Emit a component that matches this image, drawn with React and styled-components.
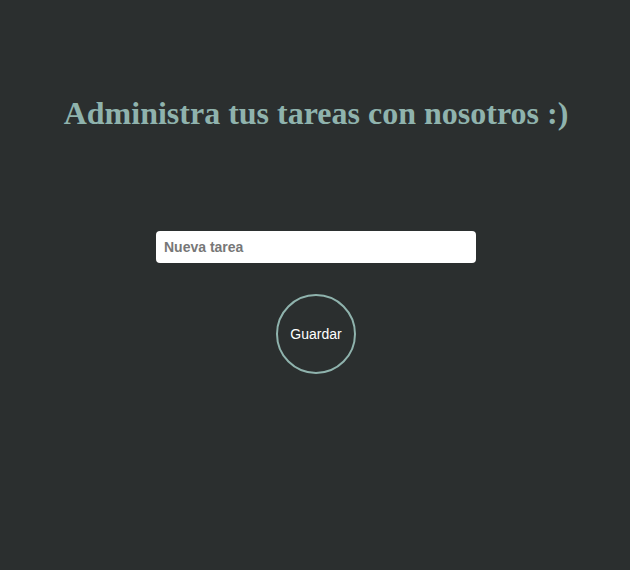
import React from 'react';
import styled, { createGlobalStyle } from 'styled-components';

const Global = createGlobalStyle`
    html, body {
        margin: 0;
        background: #2b2f2f;
        min-height: 100%;
    }
    body {
        font-family: "Liberation Sans", Arial, sans-serif;
    }
`;

const App = () => {
    return (
        <Page>
            <Global />
            <Title>Administra tus tareas con nosotros :)</Title>
            <Form onSubmit={ e => e.preventDefault() }>
                <TaskInput type="text" placeholder="Nueva tarea" />
                <SaveButton type="submit">Guardar</SaveButton>
            </Form>
        </Page>
    );
};

export default App;

const Page = styled.div`
    min-height: 570px;
    display: flex;
    flex-direction: column;
    align-items: center;
    padding: 95px 0 0 2px;
    box-sizing: border-box;
`;

const Title = styled.h1`
    margin: 0;
    font-family: "Liberation Serif", "Times New Roman", serif;
    font-size: 32px;
    font-weight: bold;
    color: #8fb3ad;
`;

const Form = styled.form`
    display: flex;
    flex-direction: column;
    align-items: center;
    margin-top: 99px;
    gap: 31px;
`;

const TaskInput = styled.input`
    width: 320px;
    height: 32px;
    box-sizing: border-box;
    border: none;
    border-radius: 4px;
    padding: 0 8px;
    font-family: "Liberation Sans", Arial, sans-serif;
    font-size: 14px;
    font-weight: bold;
    color: #333;
    background: #fff;
    outline: none;

    &::placeholder {
        color: #777;
    }
`;

const SaveButton = styled.button`
    width: 80px;
    height: 80px;
    border-radius: 50%;
    border: 2px solid #8fb3ad;
    background: transparent;
    color: #fff;
    font-family: "Liberation Sans", Arial, sans-serif;
    font-size: 14px;
    cursor: pointer;
    padding: 0;
`;
